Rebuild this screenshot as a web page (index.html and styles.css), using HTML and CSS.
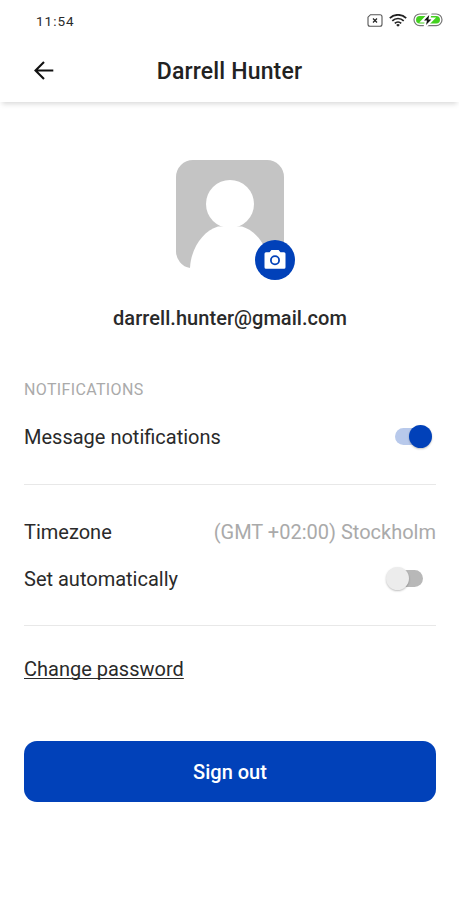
FILE: index.html
```html
<!DOCTYPE html>
<html lang="en">
<head>
  <meta charset="UTF-8">
  <title>Profile</title>
  <meta name="viewport" content="width=device-width, initial-scale=1.0">
  <link rel="stylesheet" href="styles.css">
</head>
<body>
  <div class="status-bar">
    <span class="time">11:54</span>
    <div class="status-icons">
      <svg width="16" height="13" viewBox="0 0 16 13" fill="none" stroke="#555">
        <path d="M3.5 .7H13a2 2 0 0 1 2 2v7.6a2 2 0 0 1-2 2H3a2 2 0 0 1-2-2V3.2z" stroke-width="1.1"/>
        <path d="M6 4.5l4 4M10 4.5l-4 4" stroke="#222" stroke-width="1.2"/>
      </svg>
      <svg width="18" height="13" viewBox="0 0 18 13" fill="none" stroke="#222" stroke-width="1.7">
        <path d="M.8 4.1a11.8 11.8 0 0 1 16.4 0M3.3 6.8a8.2 8.2 0 0 1 11.4 0M5.8 9.4a4.6 4.6 0 0 1 6.4 0"/>
        <path d="M7.2 10.9a2.6 2.6 0 0 1 3.6 0L9 12.8z" fill="#222" stroke="none"/>
      </svg>
      <svg width="30" height="14" viewBox="0 0 30 14">
        <rect x="1" y="1" width="28" height="11.6" rx="5.8" fill="#fff" stroke="#777" stroke-width="1.2"/>
        <rect x="3" y="3" width="24" height="7.6" rx="3.8" fill="#43d11f"/>
        <path d="M16.2 2L11 7.4h3L13 12l5.400-5.600h-3z" fill="#111" stroke="#fff" stroke-width="4" paint-order="stroke"/>
      </svg>
    </div>
  </div>

  <div class="header">
    <button class="back-btn" aria-label="Back">
      <svg width="20" height="20" viewBox="0 0 20 20" fill="none" stroke="#111" stroke-width="2.1">
        <path d="M19.3 9.500H2.200M10 .9L1.500 9.500l8.500 8.600"/>
      </svg>
    </button>
    <h1 class="title">Darrell Hunter</h1>
  </div>

  <div class="content">
    <div class="avatar">
      <svg width="108" height="108" viewBox="0 0 108 108">
        <path d="M17 0h74a17 17 0 0 1 17 17v91H14.200A17 17 0 0 1 0 91V17A17 17 0 0 1 17 0z" fill="#c4c4c4"/>
        <circle cx="54" cy="44" r="24" fill="#fff"/>
        <path d="M14 108C15 88 27 71 42 66.500H66C81 71 93 88 94 108z" fill="#fff"/>
      </svg>
      <button class="camera-btn" aria-label="Change photo">
        <svg width="22" height="20" viewBox="0 0 22 20">
          <path d="M7.400 0h7.200l1.800 2.200H20a1.500 1.500 0 0 1 1.500 1.500v13.500a1.500 1.500 0 0 1-1.500 1.500H2A1.500 1.500 0 0 1 .5 17.200V3.700A1.500 1.500 0 0 1 2 2.200h3.600z" fill="#fff"/>
          <circle cx="11" cy="10.200" r="4.100" fill="#fff" stroke="#0141b9" stroke-width="1.800"/>
        </svg>
      </button>
    </div>
    <div class="email">darrell.hunter@gmail.com</div>

    <div class="section-title">NOTIFICATIONS</div>
    <div class="row">
      <span class="message-label">Message notifications</span>
      <span class="switch on"></span>
    </div>

    <div class="divider"></div>

    <div class="row timezone">
      <span class="timezone-label">Timezone</span>
      <span class="value">(GMT +02:00) Stockholm</span>
    </div>
    <div class="row">
      <span class="auto-label">Set automatically</span>
      <span class="switch"></span>
    </div>

    <div class="divider"></div>

    <a class="link">Change password</a>
    <button class="btn">Sign out</button>
  </div>
</body>
</html>
```

FILE: styles.css
```css
body {
  margin: 0;
  height: 900px;
  font-family: Roboto, sans-serif;
  font-size: 20px;
  background: #fff;
  color: #2a2a2a;
  overflow: hidden;
}
button {
  border: none;
  padding: 0;
  background: none;
  font-family: inherit;
  cursor: pointer;
}
svg {
  display: block;
}
.status-bar {
  height: 40px;
  padding: 0 16px 0 36px;
  display: flex;
  align-items: center;
  justify-content: space-between;
}
.time {
  padding-top: 1px;
  font-size: 13.5px;
  letter-spacing: 1px;
}
.status-icons {
  display: flex;
  align-items: center;
  gap: 6px;
}
.header {
  height: 62px;
  display: grid;
  grid-template-columns: 60px 1fr 60px;
  align-items: center;
  box-shadow: 0 4px 5px -2px rgba(0, 0, 0, 0.15);
}
.back-btn {
  padding-left: 34px;
}
.title {
  margin: 0;
  font-size: 23px;
  font-weight: 500;
  letter-spacing: 0.15px;
  text-align: center;
  color: #222;
}
.content {
  padding: 58px 23px 0 24px;
}
.avatar {
  position: relative;
  width: 108px;
  height: 108px;
  margin: 0 auto;
}
.camera-btn {
  position: absolute;
  left: 79px;
  top: 80px;
  width: 40px;
  height: 40px;
  border-radius: 50%;
  background: #0141b9;
  display: flex;
  align-items: center;
  justify-content: center;
}
.email {
  margin-top: 35px;
  line-height: 30px;
  font-size: 20px;
  font-weight: 500;
  letter-spacing: 0.05px;
  text-align: center;
}
.section-title {
  margin-top: 47px;
  line-height: 20px;
  font-size: 16px;
  letter-spacing: 0.35px;
  color: #aaa;
}
.row {
  height: 46px;
  margin-top: 14px;
  display: flex;
  align-items: center;
  justify-content: space-between;
}
.divider {
  height: 1px;
  margin-top: 24px;
  background: #e8e8e8;
}
.timezone {
  margin-top: 24px;
}
.timezone + .row {
  margin-top: 1px;
}
.timezone + .row + .divider {
  margin-top: 23px;
}
.value {
  color: #aaa;
}
.switch {
  position: relative;
  width: 29px;
  height: 17px;
  margin-right: 13px;
  margin-bottom: 2px;
  border-radius: 9px;
  background: #b8b8b8;
}
.switch::before {
  content: "";
  position: absolute;
  left: -8px;
  top: -3px;
  width: 23px;
  height: 23px;
  border-radius: 50%;
  background: #ececec;
  box-shadow: 0 1px 2px rgba(0, 0, 0, 0.25);
}
.switch.on {
  width: 32px;
  margin-right: 9px;
  background: #b8c9eb;
}
.switch.on::before {
  left: 14px;
  background: #0141b9;
}
.link {
  display: block;
  margin-top: 28px;
  line-height: 30px;
  text-decoration: underline;
  text-decoration-thickness: 1px;
  text-underline-offset: 2px;
  text-decoration-skip-ink: none;
}
.btn {
  display: block;
  width: 100%;
  height: 61px;
  margin-top: 57px;
  border-radius: 13px;
  background: #0141b9;
  color: #fff;
  font-size: 20px;
  font-weight: 500;
}
```
